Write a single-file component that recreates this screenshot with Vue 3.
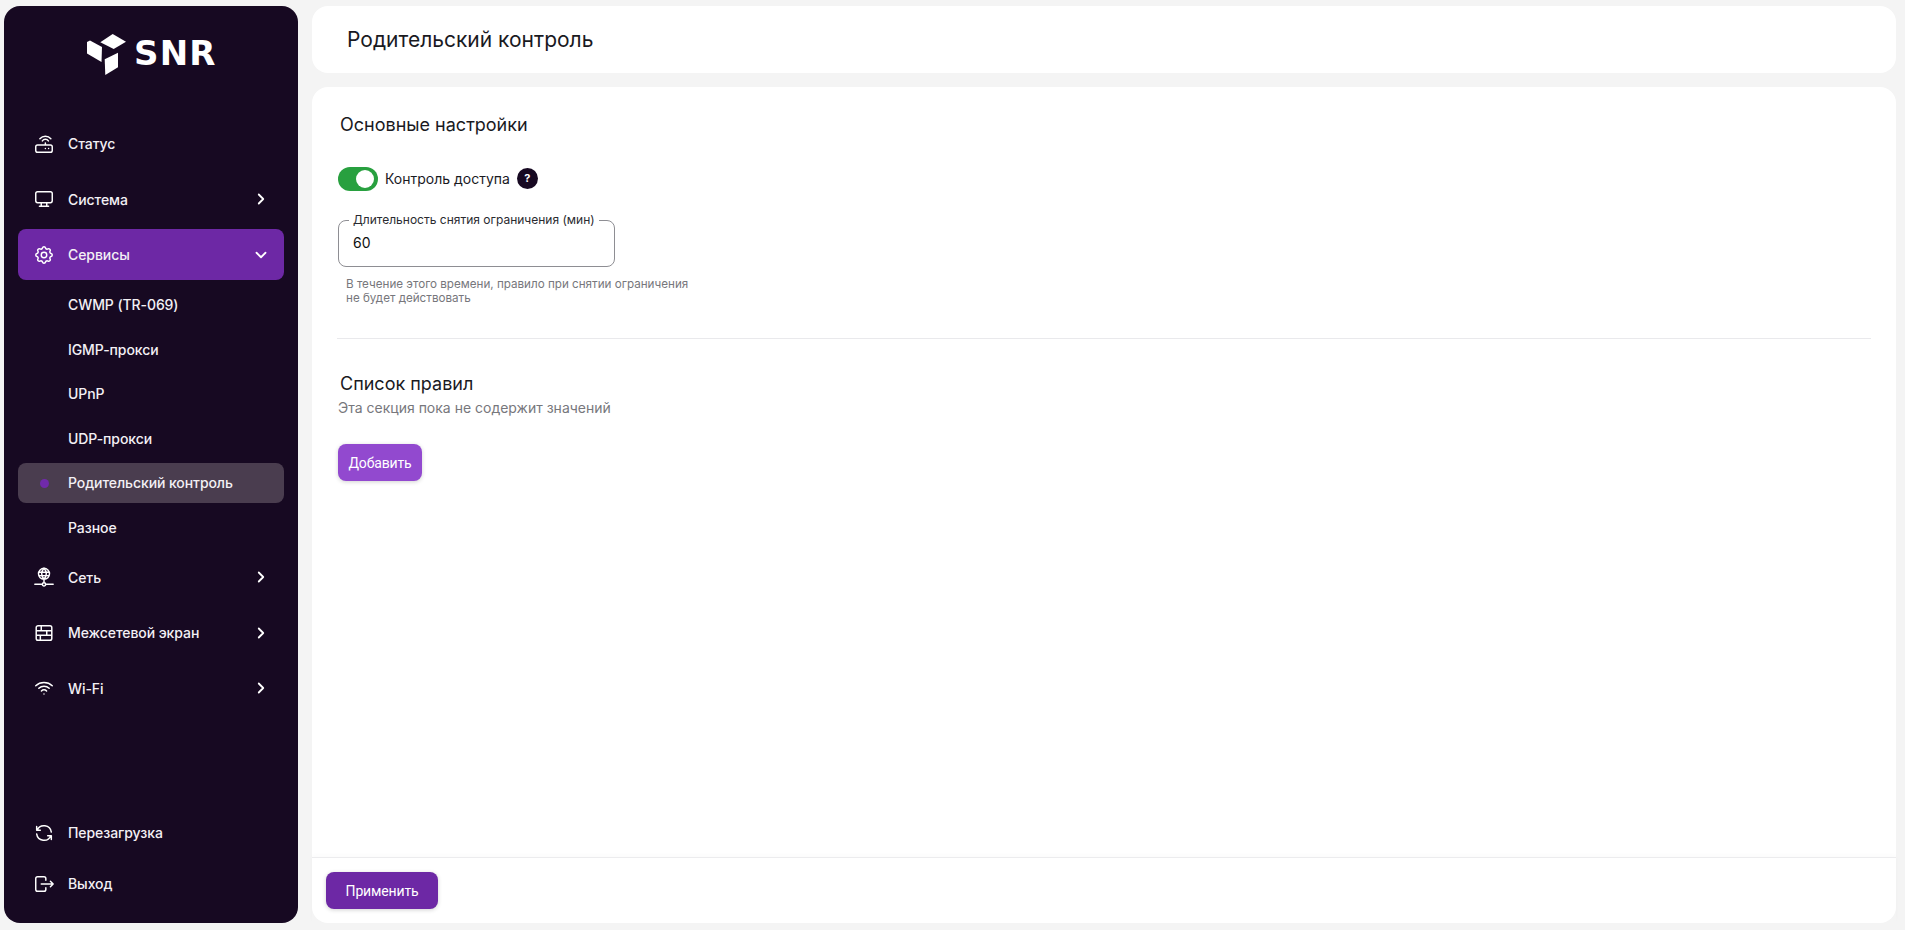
<template>
  <div class="layout">
    <aside class="sidebar">
      <div class="logo">
        <svg class="logo-mark" width="40" height="42" viewBox="0 0 40 42">
          <polygon points="0,8 3,6.5 15,13 14.5,28 0,19.5" fill="#fff" />
          <polygon points="25.7,0 39,7.7 26.7,15 13.3,8.3" fill="#fff" />
          <polygon points="17.7,25.3 31,18.7 31,33.3 18.3,41" fill="#fff" />
        </svg>
        <span class="logo-text">SNR</span>
      </div>

      <nav class="menu">
        <template v-for="item in menu" :key="item.label">
          <a class="menu-item" :class="{ open: item.open }">
            <svg class="icon" viewBox="0 0 24 24"><path :d="icons[item.icon]" /></svg>
            <span class="menu-label">{{ item.label }}</span>
            <svg v-if="item.arrow" class="chevron" viewBox="0 0 24 24">
              <path :d="item.open ? 'M6 9l6 6l6 -6' : 'M9 6l6 6l-6 6'" />
            </svg>
          </a>
          <template v-if="item.children">
            <a
              v-for="child in item.children"
              :key="child"
              class="sub-item"
              :class="{ active: child === current }"
            >
              <span v-if="child === current" class="dot"></span>
              {{ child }}
            </a>
          </template>
        </template>
      </nav>

      <div class="menu-bottom">
        <a v-for="item in bottomMenu" :key="item.label" class="menu-item">
          <svg class="icon" viewBox="0 0 24 24"><path :d="icons[item.icon]" /></svg>
          <span class="menu-label">{{ item.label }}</span>
        </a>
      </div>
    </aside>

    <main class="main">
      <header class="page-header">
        <h1>Родительский контроль</h1>
      </header>

      <section class="content">
        <div class="content-body">
          <h2 class="section-title">Основные настройки</h2>

          <div class="switch-row">
            <span class="switch"><span class="knob"></span></span>
            <span class="switch-label">Контроль доступа</span>
            <span class="help">?</span>
          </div>

          <fieldset class="field">
            <legend>Длительность снятия ограничения (мин)</legend>
            <input class="field-input" type="text" value="60" />
          </fieldset>
          <p class="hint">
            В течение этого времени, правило при снятии ограничения<br />не будет действовать
          </p>

          <hr class="divider" />

          <h2 class="section-title rules">Список правил</h2>
          <p class="empty">Эта секция пока не содержит значений</p>
          <button class="btn btn-add">Добавить</button>
        </div>

        <footer class="content-footer">
          <button class="btn btn-apply">Применить</button>
        </footer>
      </section>
    </main>
  </div>
</template>

<script setup>
const current = 'Родительский контроль'

const icons = {
  router: 'M3 15a2 2 0 0 1 2 -2h14a2 2 0 0 1 2 2v4a2 2 0 0 1 -2 2h-14a2 2 0 0 1 -2 -2z M17 17v.01 M13.5 17v.01 M13.5 13v-2 M10.2 8.6a4 4 0 0 1 6.6 0 M7.5 6.2a8 8 0 0 1 12 0',
  monitor: 'M3 6a2 2 0 0 1 2 -2h14a2 2 0 0 1 2 2v8a2 2 0 0 1 -2 2h-14a2 2 0 0 1 -2 -2z M7 20h10 M9 16v4 M15 16v4',
  gear: 'M10.325 4.317c.426 -1.756 2.924 -1.756 3.35 0a1.724 1.724 0 0 0 2.573 1.066c1.543 -.94 3.31 .826 2.37 2.37a1.724 1.724 0 0 0 1.065 2.572c1.756 .426 1.756 2.924 0 3.35a1.724 1.724 0 0 0 -1.066 2.573c.94 1.543 -.826 3.31 -2.37 2.37a1.724 1.724 0 0 0 -2.572 1.065c-.426 1.756 -2.924 1.756 -3.35 0a1.724 1.724 0 0 0 -2.573 -1.066c-1.543 .94 -3.31 -.826 -2.37 -2.37a1.724 1.724 0 0 0 -1.065 -2.572c-1.756 -.426 -1.756 -2.924 0 -3.35a1.724 1.724 0 0 0 1.066 -2.573c-.94 -1.543 .826 -3.31 2.37 -2.37c1 .608 2.296 .07 2.572 -1.065z M9 12a3 3 0 1 0 6 0a3 3 0 1 0 -6 0',
  network: 'M6 8.5a6 6 0 1 0 12 0a6 6 0 1 0 -12 0 M12 2.5c1.8 2 2.5 4 2.5 6s-.7 4 -2.5 6 M12 2.5c-1.8 2 -2.5 4 -2.5 6s.7 4 2.5 6 M6.5 6.8h11 M6.5 10.5h11 M12 14.5v3.5 M10.2 20a1.8 1.8 0 1 0 3.6 0a1.8 1.8 0 1 0 -3.6 0 M2 20h8 M14 20h8',
  firewall: 'M3.5 6a2 2 0 0 1 2 -2h13a2 2 0 0 1 2 2v12a2 2 0 0 1 -2 2h-13a2 2 0 0 1 -2 -2z M3.5 9.5h17 M3.5 14.5h17 M9 4v5.5 M15 9.5v5 M8 14.5v5.5',
  wifi: 'M12 18.5v.01 M9.172 15.172a4 4 0 0 1 5.656 0 M6.343 12.343a8 8 0 0 1 11.314 0 M3 9.5c5 -4.7 13 -4.7 18 0',
  refresh: 'M20 11a8.1 8.1 0 0 0 -15.5 -2m-.5 -4v4h4 M4 13a8.1 8.1 0 0 0 15.5 2m.5 4v-4h-4',
  logout: 'M14 8v-2a2 2 0 0 0 -2 -2h-7a2 2 0 0 0 -2 2v12a2 2 0 0 0 2 2h7a2 2 0 0 0 2 -2v-2 M9 12h13 M19 9l3 3l-3 3',
}

const menu = [
  { label: 'Статус', icon: 'router' },
  { label: 'Система', icon: 'monitor', arrow: true },
  {
    label: 'Сервисы',
    icon: 'gear',
    arrow: true,
    open: true,
    children: ['CWMP (TR-069)', 'IGMP-прокси', 'UPnP', 'UDP-прокси', 'Родительский контроль', 'Разное'],
  },
  { label: 'Сеть', icon: 'network', arrow: true },
  { label: 'Межсетевой экран', icon: 'firewall', arrow: true },
  { label: 'Wi-Fi', icon: 'wifi', arrow: true },
]

const bottomMenu = [
  { label: 'Перезагрузка', icon: 'refresh' },
  { label: 'Выход', icon: 'logout' },
]
</script>

<style>
html,
body {
  margin: 0;
  height: 100%;
  overflow: hidden;
  background: #f4f4f4;
}
</style>

<style scoped>
.layout {
  box-sizing: border-box;
  height: 100vh;
  display: flex;
  gap: 14px;
  padding: 6px 9px 7px 4px;
  font-family: Inter, "Liberation Sans", sans-serif;
  color: #1a1a1f;
}

.sidebar {
  width: 294px;
  flex-shrink: 0;
  box-sizing: border-box;
  display: flex;
  flex-direction: column;
  padding: 0 14px 14px;
  background: #170922;
  border-radius: 16px;
  color: #f3f0f5;
}

.logo {
  height: 112px;
  display: flex;
  align-items: flex-start;
  padding: 28px 0 0 69px;
  box-sizing: border-box;
  gap: 7px;
}

.logo-text {
  font-family: "DejaVu Sans", sans-serif;
  font-weight: 700;
  font-size: 34px;
  line-height: 40px;
  letter-spacing: 1.2px;
  color: #fff;
  margin-top: -1px;
}

.menu {
  display: flex;
  flex-direction: column;
  gap: 4.5px;
}

.menu-bottom {
  margin-top: auto;
  display: flex;
  flex-direction: column;
}

.menu-item {
  height: 51px;
  display: flex;
  align-items: center;
  padding: 0 14px 0 15px;
  border-radius: 8px;
  font-size: 14px;
  font-weight: 500;
  letter-spacing: -0.08px;
}

.menu-item.open {
  background: #6d28a5;
}

.icon {
  width: 22px;
  height: 22px;
  flex-shrink: 0;
  margin-right: 13px;
  fill: none;
  stroke: #fff;
  stroke-width: 1.6;
  stroke-linecap: round;
  stroke-linejoin: round;
}

.menu-label {
  flex: 1;
}

.chevron {
  width: 18px;
  height: 18px;
  fill: none;
  stroke: #fff;
  stroke-width: 2.4;
  stroke-linecap: round;
  stroke-linejoin: round;
}

.sub-item {
  position: relative;
  height: 40px;
  display: flex;
  align-items: center;
  padding-left: 50px;
  border-radius: 8px;
  font-size: 14px;
  font-weight: 500;
  letter-spacing: -0.08px;
}

.sub-item.active {
  background: #4a3d4f;
}

.dot {
  position: absolute;
  left: 22px;
  top: 16px;
  width: 9px;
  height: 9px;
  border-radius: 50%;
  background: #702aaa;
}

.main {
  flex: 1;
  min-width: 0;
  display: flex;
  flex-direction: column;
  gap: 14px;
}

.page-header {
  height: 67px;
  flex-shrink: 0;
  display: flex;
  align-items: center;
  padding-left: 35px;
  background: #fff;
  border-radius: 16px;
}

.page-header h1 {
  margin: 0;
  font-size: 21px;
  font-weight: 400;
}

.content {
  flex: 1;
  min-height: 0;
  display: flex;
  flex-direction: column;
  background: #fff;
  border-radius: 16px;
}

.content-body {
  flex: 1;
  padding: 27px 25px 0 26px;
}

.section-title {
  margin: 0 0 0 2px;
  font-size: 18px;
  line-height: 22px;
  font-weight: 400;
}

.switch-row {
  display: flex;
  align-items: center;
  margin-top: 31px;
  height: 24px;
}

.switch {
  position: relative;
  width: 40px;
  height: 24px;
  border-radius: 12px;
  background: #28a03f;
}

.knob {
  position: absolute;
  top: 3px;
  right: 4px;
  width: 18px;
  height: 18px;
  border-radius: 50%;
  background: #fff;
}

.switch-label {
  margin: 0 0 2px 7px;
  font-size: 14px;
}

.help {
  width: 21px;
  height: 21px;
  margin: 0 0 1px 7px;
  border-radius: 50%;
  background: #170922;
  color: #fff;
  font-size: 11px;
  font-weight: 700;
  line-height: 20px;
  text-align: center;
}

.field {
  box-sizing: border-box;
  width: 277px;
  height: 54px;
  margin: 22px 0 0;
  padding: 0 14px;
  border: 1px solid #8e8e93;
  border-radius: 8px;
}

.field legend {
  padding: 0 4px;
  margin-left: -4px;
  font-size: 12px;
  line-height: 14px;
  white-space: nowrap;
  color: #2a2a2f;
}

.field-input {
  display: block;
  width: 100%;
  margin-top: 6px;
  padding: 0;
  border: none;
  outline: none;
  background: transparent;
  font: 14px/20px Inter, "Liberation Sans", sans-serif;
  color: #111;
}

.hint {
  margin: 10px 0 0 8px;
  font-size: 11.65px;
  line-height: 14px;
  color: #77777c;
}

.divider {
  margin: 33px 0 0 -1px;
  border: none;
  border-top: 1px solid #e9e9ec;
}

.rules {
  margin-top: 34px;
}

.empty {
  margin: 4px 0 0;
  font-size: 14px;
  line-height: 18px;
  color: #77777c;
}

.btn {
  display: block;
  border: none;
  border-radius: 8px;
  color: #fff;
  font-family: Roboto, Inter, sans-serif;
  font-size: 14px;
  font-weight: 400;
  letter-spacing: -0.15px;
  box-shadow: 0 1px 4px rgba(0, 0, 0, 0.18);
}

.btn-add {
  width: 84px;
  height: 37px;
  margin-top: 27px;
  background: #9249cf;
}

.content-footer {
  height: 66px;
  flex-shrink: 0;
  box-sizing: border-box;
  padding: 14px 14px 0;
  border-top: 1px solid #ececee;
  box-shadow: 0 -2px 4px rgba(0, 0, 0, 0.02);
}

.btn-apply {
  width: 112px;
  height: 37px;
  background: #6d28a5;
}
</style>
